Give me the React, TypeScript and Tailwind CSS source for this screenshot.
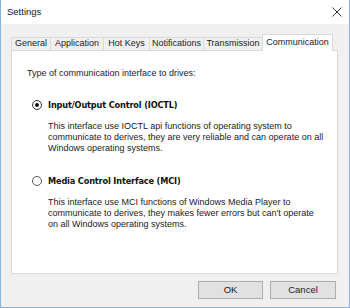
import React from "react";

const tabs = [
  { label: "General", w: "w-[40px]" },
  { label: "Application", w: "w-[54px]" },
  { label: "Hot Keys", w: "w-[47px]" },
  { label: "Notifications", w: "w-[55px]" },
  { label: "Transmission", w: "w-[60px]" },
];

function Radio({ checked }: { checked: boolean }) {
  return (
    <span
      className={
        "flex h-[10px] w-[10px] shrink-0 items-center justify-center rounded-full border bg-white " +
        (checked ? "border-[#333333]" : "border-[#555555]")
      }
    >
      {checked && <span className="h-[4px] w-[4px] rounded-full bg-[#111111]" />}
    </span>
  );
}

function Option({ checked, title, lines }: { checked: boolean; title: string; lines: string[] }) {
  return (
    <div className="flex flex-col">
      <div className="flex h-[12px] items-center gap-[6px] pl-[5px]">
        <Radio checked={checked} />
        <span className="font-['DejaVu_Sans',sans-serif] text-[8.2px] font-bold tracking-[-0.15px] whitespace-nowrap text-[#111111]">{title}</span>
      </div>
      <div className="mt-[10px] pl-[21px] leading-[11px] whitespace-nowrap">
        {lines.map(l => (
          <div key={l}>{l}</div>
        ))}
      </div>
    </div>
  );
}

export default function App() {
  return (
    <div className="flex h-[308px] w-[350px] flex-col border border-t-0 border-[#86b3e8] font-['Liberation_Sans',Arial,sans-serif] text-[9px] text-[#1a1a1a]">
      {/* title bar */}
      <div className="flex h-[24px] items-center justify-between bg-white pl-[6px] pr-[6px]">
        <span className="text-[9.5px] text-[#222]">Settings</span>
        <svg width="10" height="10" viewBox="0 0 10 10" className="mr-[1px]">
          <path d="M0.5 0.5 L9.5 9.5 M9.5 0.5 L0.5 9.5" stroke="#333" strokeWidth="1" />
        </svg>
      </div>

      {/* body */}
      <div className="flex flex-1 flex-col bg-[#f0f0f0] pl-[10px] pr-[11px] pt-[10px]">
        <div className="flex h-[16px] items-end">
          {tabs.map(t => (
            <div
              key={t.label}
              className={"-mr-px flex h-[13px] items-center justify-center whitespace-nowrap border border-b-0 border-[#d9d9d9] bg-[#f0f0f0] " + t.w}
            >
              {t.label}
            </div>
          ))}
          <div className="relative z-10 -mb-px flex h-[17px] w-[71px] items-center justify-center whitespace-nowrap border border-b-0 border-[#d9d9d9] bg-white pb-[1px]">
            Communication
          </div>
        </div>

        <div className="flex h-[224px] flex-col border border-[#d9d9d9] bg-white pl-[15px] pt-[17px]">
          <div className="leading-[11px]">Type of communication interface to drives:</div>
          <div className="mt-[20px]">
            <Option
              checked
              title="Input/Output Control (IOCTL)"
              lines={[
                "This interface use IOCTL api functions of operating system to",
                "communicate to derives, they are very reliable and can operate on all",
                "Windows operating systems.",
              ]}
            />
          </div>
          <div className="mt-[21px]">
            <Option
              checked={false}
              title="Media Control Interface (MCI)"
              lines={[
                "This interface use MCI functions of Windows Media Player to",
                "communicate to derives, they makes fewer errors but can't operate",
                "on all Windows operating systems.",
              ]}
            />
          </div>
        </div>

        <div className="mt-[7px] flex justify-end gap-[7px] pr-[2px]">
          <button className="h-[18px] w-[65px] border border-[#adadad] bg-[#e1e1e1] text-[9.5px]">OK</button>
          <button className="h-[18px] w-[66px] border border-[#adadad] bg-[#e1e1e1] text-[9.5px]">Cancel</button>
        </div>
      </div>
    </div>
  );
}
